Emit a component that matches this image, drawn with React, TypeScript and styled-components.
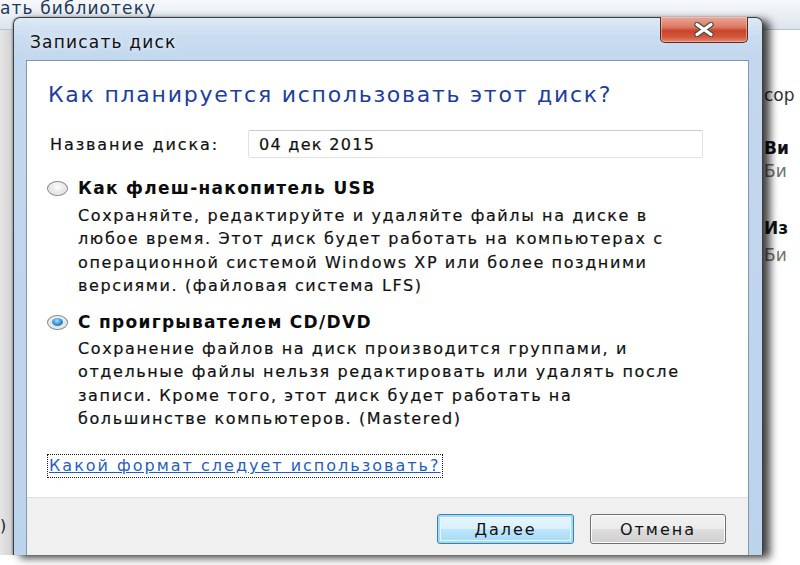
import React from "react";
import styled, { createGlobalStyle } from "styled-components";

const GlobalStyle = createGlobalStyle`
  html, body { margin: 0; padding: 0; background: #ffffff; }
  body { font-family: "DejaVu Sans", "Open Sans", sans-serif; }
  * { box-sizing: border-box; }
`;

const Page = styled.div`
  width: 800px;
  height: 565px;
  display: flex;
  flex-direction: column;
  overflow: hidden;
  background: #ffffff;
`;

const Scene = styled.div`
  position: relative;
  height: 555px;
  display: grid;
  grid-template-rows: 30px 1fr;
  background: #ffffff;
`;

const Toolbar = styled.div`
  display: flex;
  align-items: flex-start;
  background: linear-gradient(to bottom, #f6f8fb 0%, #e9eef4 55%, #dde4ec 100%);
  border-bottom: 1px solid #b9c3cf;
`;

const ToolbarText = styled.span`
  font-size: 17px;
  line-height: 17px;
  color: #1e395b;
  letter-spacing: 1.1px;
  white-space: nowrap;
`;

const ExplorerBody = styled.div`
  display: flex;
  justify-content: space-between;
`;

const LeftPane = styled.div`
  width: 14px;
  background: linear-gradient(to right, #e6e6e6, #cfcfcf);
  display: flex;
  align-items: flex-end;
  padding-bottom: 20px;
  font-size: 16px;
  color: #222;
  overflow: hidden;
`;

const RightPane = styled.div`
  width: 36px;
  padding-top: 54px;
  display: flex;
  flex-direction: column;
  overflow: hidden;
`;

const PaneItem = styled.span<{ $tone: "main" | "sub" | "plain"; $gap: number }>`
  font-size: 17px;
  line-height: 22px;
  margin-top: ${(p) => p.$gap}px;
  white-space: nowrap;
  color: ${(p) => (p.$tone === "sub" ? "#707070" : p.$tone === "main" ? "#111" : "#333")};
  font-weight: ${(p) => (p.$tone === "main" ? 600 : 400)};
`;

const Dialog = styled.div`
  position: absolute;
  left: 13px;
  top: 17px;
  bottom: 0;
  width: 750px;
  display: flex;
  flex-direction: column;
  padding: 0 13px 0 12px;
  border: 1px solid #3a3f45;
  border-bottom: none;
  border-radius: 7px 7px 0 0;
  background: linear-gradient(to bottom, #dde9f6 0px, #c9dcf0 20px, #c3d7ee 42px, #bcd3ec 100%);
  box-shadow: 7px 3px 9px rgba(0, 0, 0, 0.75), -1px 0 2px rgba(0, 0, 0, 0.25);
`;

const TitleBar = styled.div`
  height: 42px;
  display: flex;
  justify-content: space-between;
  align-items: flex-start;
`;

const TitleText = styled.span`
  margin-top: 14px;
  margin-left: 4px;
  font-size: 17px;
  line-height: 20px;
  color: #111;
  letter-spacing: 1.2px;
  text-shadow: 0 0 6px rgba(255, 255, 255, 0.9);
`;

const CloseButton = styled.div`
  width: 88px;
  height: 26px;
  margin-top: -1px;
  margin-right: 1px;
  display: flex;
  align-items: center;
  justify-content: center;
  border: 1px solid #5a2a22;
  border-top: none;
  border-radius: 0 0 5px 5px;
  background: linear-gradient(
    to bottom,
    #e9a999 0%,
    #dc7a64 40%,
    #c9452a 55%,
    #d4583d 80%,
    #e48a6d 100%
  );
  box-shadow: inset 0 0 0 1px rgba(255, 210, 200, 0.5);
`;

const Client = styled.div`
  flex: 1;
  display: flex;
  flex-direction: column;
  border: 1px solid #8396ad;
  border-bottom: none;
  background: #ffffff;
`;

const Content = styled.div`
  display: flex;
  flex-direction: column;
  align-items: flex-start;
  padding: 20px 0 20px 21px;
  color: #111;
`;

const Heading = styled.h1`
  margin: 0;
  font-size: 22px;
  line-height: 28px;
  font-weight: 400;
  color: #1c3e9e;
  letter-spacing: 1.75px;
  white-space: nowrap;
`;

const NameRow = styled.div`
  display: flex;
  align-items: center;
  margin-top: 21px;
`;

const NameLabel = styled.label`
  width: 200px;
  padding-left: 2px;
  font-size: 16px;
  letter-spacing: 1.9px;
  color: #111;
  -webkit-text-stroke: 0.2px #111;
`;

const NameInput = styled.div`
  width: 455px;
  height: 28px;
  display: flex;
  align-items: center;
  padding-left: 10px;
  border: 1px solid #dfe3e8;
  border-top-color: #c9cdd2;
  border-radius: 2px;
  font-size: 16px;
  letter-spacing: 1.3px;
  color: #111;
  -webkit-text-stroke: 0.2px #111;
`;

const Option = styled.div<{ $gap: number }>`
  display: grid;
  grid-template-columns: 31px 1fr;
  margin-top: ${(p) => p.$gap}px;
  margin-left: -1px;
`;

const RadioCell = styled.div`
  height: 24px;
  display: flex;
  align-items: center;
`;

const Radio = styled.span<{ $checked: boolean }>`
  width: 21px;
  height: 15px;
  border-radius: 50%;
  display: flex;
  align-items: center;
  justify-content: center;
  border: 1px solid #8a8a8a;
  background: radial-gradient(ellipse at 50% 40%, #fdfdfd 0%, #e6e6e6 55%, #c4c4c4 100%);
  box-shadow: inset 0 0 0 1px #f5f5f5;
  &::after {
    content: "";
    display: ${(p) => (p.$checked ? "block" : "none")};
    width: 11px;
    height: 8px;
    border-radius: 50%;
    background: radial-gradient(ellipse at 45% 35%, #9fe0ff 0%, #3b9be0 45%, #0d4f8c 100%);
  }
`;

const OptionTitle = styled.div`
  font-size: 17px;
  line-height: 24px;
  font-weight: 700;
  letter-spacing: 1.3px;
  color: #0c0c0c;
  white-space: nowrap;
`;

const OptionText = styled.div<{ $gap: number }>`
  grid-column: 2;
  margin-top: ${(p) => p.$gap}px;
  display: flex;
  flex-direction: column;
`;

const OptionLine = styled.span`
  font-size: 16px;
  line-height: 23.3px;
  letter-spacing: 1.6px;
  color: #111;
  -webkit-text-stroke: 0.2px #111;
  white-space: nowrap;
`;

const HelpLink = styled.a`
  margin-top: 25px;
  display: block;
  padding: 0 1px;
  font-size: 16px;
  line-height: 22px;
  letter-spacing: 2px;
  color: #1f5fbf;
  text-decoration: underline;
  outline: 1px dotted #1a1a1a;
  white-space: nowrap;
`;

const Footer = styled.div`
  flex: 1;
  display: flex;
  justify-content: flex-end;
  align-items: flex-start;
  gap: 16px;
  padding: 16px 22px 0 0;
  background: #f0f0f0;
  border-top: 1px solid #dfdfdf;
`;

const Button = styled.button<{ $default?: boolean; $width: number }>`
  width: ${(p) => p.$width}px;
  height: 30px;
  font-family: inherit;
  font-size: 16px;
  letter-spacing: 2px;
  color: #111;
  border-radius: 3px;
  border: 1px solid ${(p) => (p.$default ? "#3c7fb1" : "#707070")};
  background: ${(p) =>
    p.$default
      ? "linear-gradient(to bottom, #eaf6fd 0%, #d9f0fc 50%, #bee6fd 51%, #a7d9f5 100%)"
      : "linear-gradient(to bottom, #f2f2f2 0%, #ebebeb 50%, #dddddd 51%, #cfcfcf 100%)"};
  box-shadow: ${(p) =>
    p.$default ? "inset 0 0 0 2px #9fdcf8, inset 0 0 0 3px #e8f6fd" : "inset 0 0 0 1px #fcfcfc"};
  padding: 0;
`;

function CloseGlyph() {
  return (
    <svg width="24" height="15" viewBox="0 0 24 15">
      <path d="M5 2.5 L19 12.5 M19 2.5 L5 12.5" stroke="#4a4a4a" strokeWidth="5.5" strokeLinecap="round" />
      <path d="M5 2.5 L19 12.5 M19 2.5 L5 12.5" stroke="#ffffff" strokeWidth="3.3" strokeLinecap="round" />
    </svg>
  );
}

const option1 = [
  "Сохраняйте, редактируйте и удаляйте файлы на диске в",
  "любое время. Этот диск будет работать на компьютерах с",
  "операционной системой Windows XP или более поздними",
  "версиями. (файловая система LFS)",
];

const option2 = [
  "Сохранение файлов на диск производится группами, и",
  "отдельные файлы нельзя редактировать или удалять после",
  "записи. Кроме того, этот диск будет работать на",
  "большинстве компьютеров. (Mastered)",
];

export default function App() {
  return (
    <Page>
      <GlobalStyle />
      <Scene>
        <Toolbar>
          <ToolbarText>ать библиотеку</ToolbarText>
        </Toolbar>
        <ExplorerBody>
          <LeftPane>)</LeftPane>
          <RightPane>
            <PaneItem $tone="plain" $gap={0}>сор</PaneItem>
            <PaneItem $tone="main" $gap={31}>Ви</PaneItem>
            <PaneItem $tone="sub" $gap={1}>Би</PaneItem>
            <PaneItem $tone="main" $gap={35}>Из</PaneItem>
            <PaneItem $tone="sub" $gap={5}>Би</PaneItem>
          </RightPane>
        </ExplorerBody>
        <Dialog>
          <TitleBar>
            <TitleText>Записать диск</TitleText>
            <CloseButton>
              <CloseGlyph />
            </CloseButton>
          </TitleBar>
          <Client>
            <Content>
              <Heading>Как планируется использовать этот диск?</Heading>
              <NameRow>
                <NameLabel>Название диска:</NameLabel>
                <NameInput>04 дек 2015</NameInput>
              </NameRow>
              <Option $gap={18}>
                <RadioCell>
                  <Radio $checked={false} />
                </RadioCell>
                <OptionTitle>Как флеш-накопитель USB</OptionTitle>
                <OptionText $gap={4}>
                  {option1.map((l) => (
                    <OptionLine key={l}>{l}</OptionLine>
                  ))}
                </OptionText>
              </Option>
              <Option $gap={13}>
                <RadioCell>
                  <Radio $checked={true} />
                </RadioCell>
                <OptionTitle>С проигрывателем CD/DVD</OptionTitle>
                <OptionText $gap={3}>
                  {option2.map((l) => (
                    <OptionLine key={l}>{l}</OptionLine>
                  ))}
                </OptionText>
              </Option>
              <HelpLink href="#">Какой формат следует использовать?</HelpLink>
            </Content>
            <Footer>
              <Button $default $width={137}>Далее</Button>
              <Button $width={136}>Отмена</Button>
            </Footer>
          </Client>
        </Dialog>
      </Scene>
    </Page>
  );
}
